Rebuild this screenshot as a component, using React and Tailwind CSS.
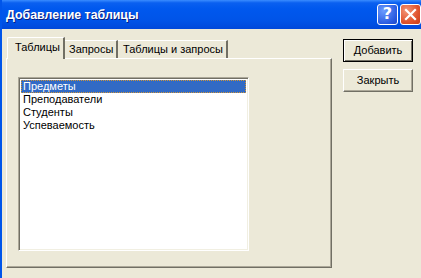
import React from "react";

export default function App() {
  const items = ["Предметы", "Преподаватели", "Студенты", "Успеваемость"];
  return (
    <div className="w-[421px] h-[278px] bg-[#ECE9D8] overflow-hidden flex flex-col border-l-2 border-[#0055EA] font-['Liberation_Sans',sans-serif] text-[11px] text-black leading-none">
      {/* Title bar */}
      <div className="h-[29px] -ml-[2px] flex items-center justify-between bg-[linear-gradient(to_bottom,#3A8CFF_0%,#0A60F0_10%,#0058EE_30%,#0054E8_70%,#0048DA_100%)] shrink-0">
        <span className="pl-[6px] pt-[2px] text-white font-bold text-[12.4px] font-['Liberation_Sans',sans-serif] [text-shadow:1px_1px_0_#0A1E80]">
          Добавление таблицы
        </span>
        <div className="flex gap-[2px] pr-0 mt-[-1px]">
          <div className="w-[21px] h-[21px] rounded-[3px] border border-white bg-[radial-gradient(circle_at_30%_30%,#6B9CFF,#2A5BE0_70%,#1C47C8)] flex items-center justify-center text-white font-bold text-[16px] font-['DejaVu_Sans',sans-serif]">
            ?
          </div>
          <div className="w-[21px] h-[21px] rounded-[3px] border border-white bg-[radial-gradient(circle_at_30%_30%,#F39577,#E0542E_60%,#C63B18)] flex items-center justify-center">
            <svg width="13" height="13" viewBox="0 0 13 13">
              <path d="M2 2 L11 11 M11 2 L2 11" stroke="white" strokeWidth="2.2" strokeLinecap="square" />
            </svg>
          </div>
        </div>
      </div>

      {/* Body */}
      <div className="flex pl-[4px] pt-[8px]">
        {/* Left column */}
        <div className="w-[326px] flex flex-col">
          <div className="flex items-end h-[21px] pl-[1px]">
            <div className="relative z-10 -mb-[1px] w-[58px] h-[22px] bg-[#ECE9D8] border-t border-l border-white border-r-2 border-r-[#716F64] rounded-tl-[2px] flex items-center pl-[7px] pb-[3px]">
              Таблицы
            </div>
            <div className="w-[53px] h-[18px] bg-[#ECE9D8] border-t border-white border-r-2 border-r-[#716F64] flex items-center pl-[4px]">
              Запросы
            </div>
            <div className="w-[110px] h-[18px] bg-[#ECE9D8] border-t border-white border-r-2 border-r-[#716F64] flex items-center pl-[5px]">
              Таблицы и запросы
            </div>
          </div>
          <div className="h-[210px] border-t border-l border-white border-r border-b border-r-[#716F64] border-b-[#716F64] shadow-[inset_-1px_-1px_0_#ACA899] pl-[11px] pt-[18px]">
            <div className="w-[231px] h-[174px] bg-white border border-t-[#ACA899] border-l-[#ACA899] border-r-white border-b-white shadow-[inset_1px_1px_0_#716F64,inset_-1px_-1px_0_#F1EFE2] pt-[2px] pl-[2px] pr-[2px]">
              {items.map((t, i) => (
                <div
                  key={t}
                  className={
                    i === 0
                      ? "h-[13px] bg-[#316AC5] text-white pl-[2px] flex items-center outline-1 outline-dotted outline-[#CE9539] -outline-offset-1"
                      : "h-[13px] pl-[2px] flex items-center"
                  }
                >
                  {t}
                </div>
              ))}
            </div>
          </div>
        </div>

        {/* Right column */}
        <div className="ml-[11px] pt-[2px] flex flex-col gap-[7px]">
          <div className="w-[70px] h-[23px] border border-black shadow-[inset_1px_1px_0_#fff,inset_-1px_-1px_0_#716F64] flex items-center justify-center">
            Добавить
          </div>
          <div className="w-[70px] h-[23px] border-t border-l border-white border-r border-b border-r-[#716F64] border-b-[#716F64] shadow-[inset_-1px_-1px_0_#ACA899] flex items-center justify-center">
            Закрыть
          </div>
        </div>
      </div>
    </div>
  );
}
